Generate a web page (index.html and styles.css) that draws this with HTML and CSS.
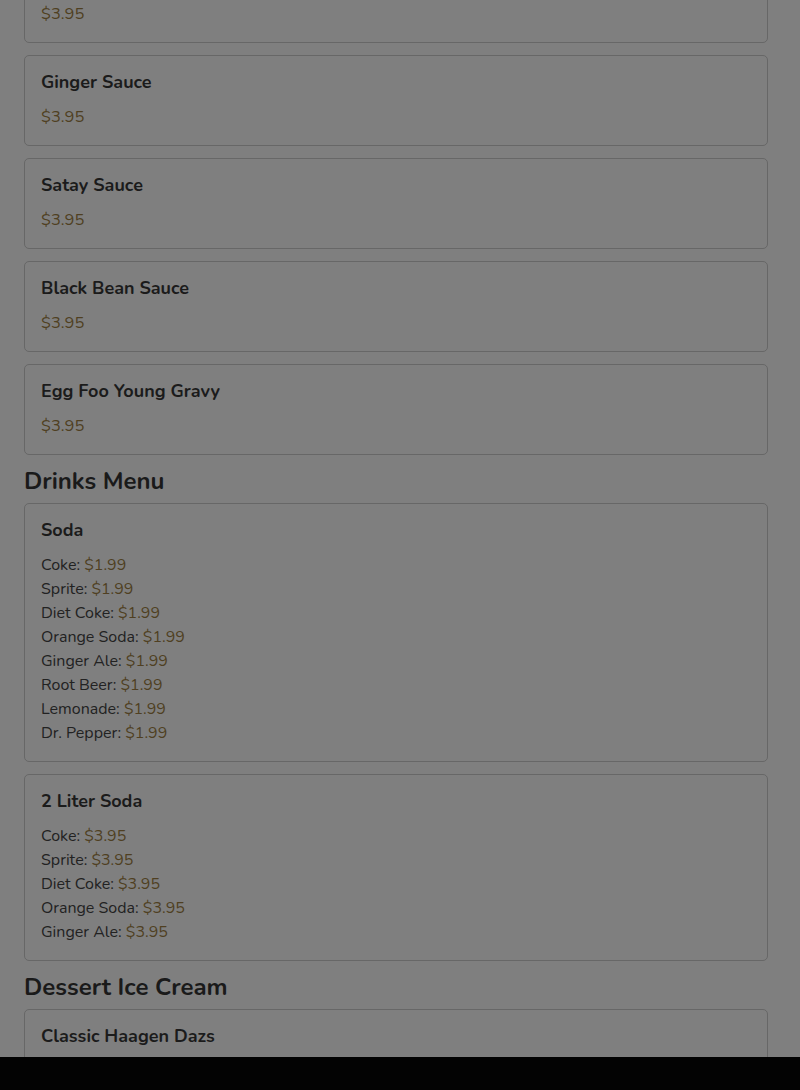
FILE: index.html
```html
<!DOCTYPE html>
<html lang="en">
<head>
<meta charset="utf-8">
<title>Menu</title>
<link rel="stylesheet" href="styles.css">
</head>
<body>
<main class="menu">
  <section class="section">
    <div class="card">
      <h3 class="item-title">Sweet and Sour Sauce</h3>
      <div class="price">$3.95</div>
    </div>
    <div class="card">
      <h3 class="item-title">Ginger Sauce</h3>
      <div class="price">$3.95</div>
    </div>
    <div class="card">
      <h3 class="item-title">Satay Sauce</h3>
      <div class="price">$3.95</div>
    </div>
    <div class="card">
      <h3 class="item-title">Black Bean Sauce</h3>
      <div class="price">$3.95</div>
    </div>
    <div class="card">
      <h3 class="item-title">Egg Foo Young Gravy</h3>
      <div class="price">$3.95</div>
    </div>
  </section>

  <section class="section">
    <h2 class="section-title">Drinks Menu</h2>
    <div class="card">
      <h3 class="item-title">Soda</h3>
      <ul class="options">
        <li>Coke: <span class="price">$1.99</span></li>
        <li>Sprite: <span class="price">$1.99</span></li>
        <li>Diet Coke: <span class="price">$1.99</span></li>
        <li>Orange Soda: <span class="price">$1.99</span></li>
        <li>Ginger Ale: <span class="price">$1.99</span></li>
        <li>Root Beer: <span class="price">$1.99</span></li>
        <li>Lemonade: <span class="price">$1.99</span></li>
        <li>Dr. Pepper: <span class="price">$1.99</span></li>
      </ul>
    </div>
    <div class="card">
      <h3 class="item-title">2 Liter Soda</h3>
      <ul class="options">
        <li>Coke: <span class="price">$3.95</span></li>
        <li>Sprite: <span class="price">$3.95</span></li>
        <li>Diet Coke: <span class="price">$3.95</span></li>
        <li>Orange Soda: <span class="price">$3.95</span></li>
        <li>Ginger Ale: <span class="price">$3.95</span></li>
      </ul>
    </div>
  </section>

  <section class="section">
    <h2 class="section-title">Dessert Ice Cream</h2>
    <div class="card">
      <h3 class="item-title">Classic Haagen Dazs</h3>
      <div class="price">$3.95</div>
    </div>
  </section>
</main>
<div class="bottom-bar"></div>
</body>
</html>
```

FILE: styles.css
```css
html, body {
  margin: 0;
  padding: 0;
  background: #7f7f7f;
  overflow: hidden;
}

body {
  font-family: "Nunito", "Lato", "Noto Sans", sans-serif;
  color: #1d1d1d;
}

.menu {
  padding: 0 32px 0 24px;
  margin-top: -48px;
  display: flex;
  flex-direction: column;
  gap: 12px;
}

.section {
  display: flex;
  flex-direction: column;
  gap: 12px;
}

.section-title {
  margin: 0 0 -5px;
  font-size: 24px;
  line-height: 29px;
  font-weight: 700;
  color: #1a1a1a;
}

.card {
  border: 1px solid #676767;
  border-radius: 5px;
  padding: 16px;
}

.item-title {
  margin: 0 0 12px;
  font-size: 18px;
  line-height: 21px;
  font-weight: 700;
  color: #1b1b1b;
}

.price {
  font-size: 16.5px;
  line-height: 24px;
  color: #4f3f22;
}

.options {
  list-style: none;
  margin: 0;
  padding: 0;
  font-size: 16px;
  line-height: 24px;
  color: #222222;
}

.options .price {
  font-size: 16px;
}

.bottom-bar {
  position: fixed;
  left: 0;
  right: 0;
  bottom: 0;
  height: 33px;
  background: #030303;
}
```
